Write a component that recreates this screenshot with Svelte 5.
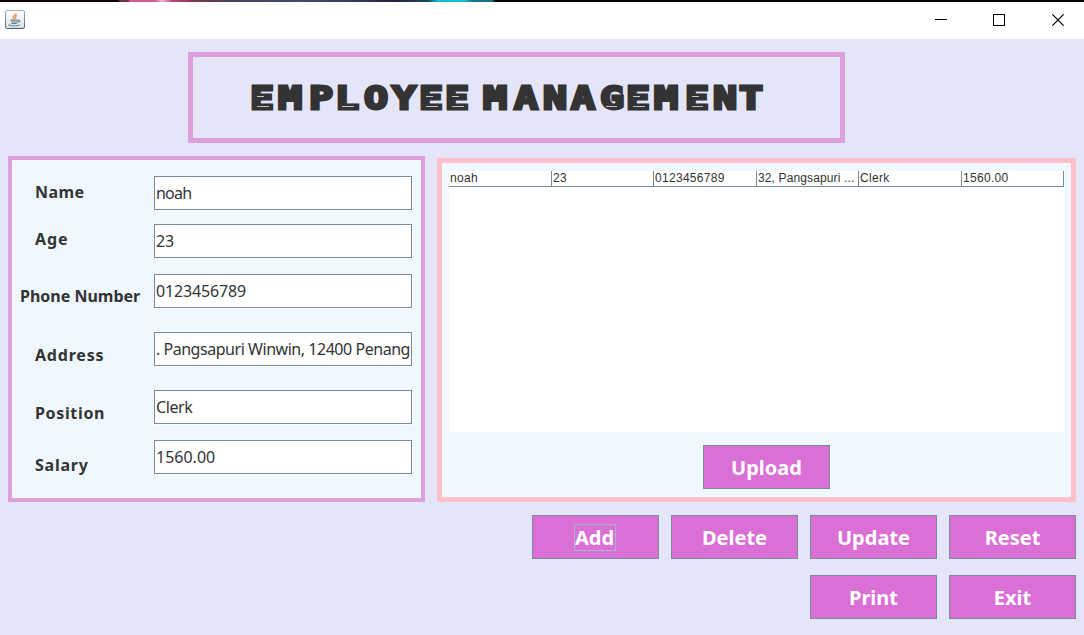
<script>
  const fields = [
    { label: 'Name', value: 'noah', gap: 0, shift: -1, indent: 23, ls: 0.4, vs: -0.8 },
    { label: 'Age', value: '23', gap: 14, shift: -2, indent: 23, ls: 0.9, vs: -0.15 },
    { label: 'Phone Number', value: '0123456789', gap: 16, shift: 5, indent: 8, ls: 0, vs: -0.15 },
    { label: 'Address', value: '. Pangsapuri Winwin, 12400 Penang', gap: 24, shift: 6, indent: 23, ls: 0.8, vs: -0.46 },
    { label: 'Position', value: 'Clerk', gap: 24, shift: 6, indent: 23, ls: 0.65, vs: -0.4 },
    { label: 'Salary', value: '1560.00', gap: 16, shift: 8, indent: 23, ls: 0.75, vs: 0 }
  ];
  const cells = ['noah', '23', '0123456789', '32, Pangsapuri ...', 'Clerk', '1560.00'];
  const actions = ['Add', 'Delete', 'Update', 'Reset', 'Print', 'Exit'];
  const stretch = 1.23;
  const letterX = [250, 278, 309, 335, 364, 392, 419, 445, 471, 483, 514, 543, 571, 600, 626, 654, 685, 713, 739]
    .map((x) => (x / stretch).toFixed(2))
    .join(' ');
</script>

<div class="window">
  <header>
    <svg class="java" width="20" height="19" viewBox="0 0 20 19">
      <defs>
        <linearGradient id="edge" x1="0" y1="0" x2="0" y2="1"><stop offset="0" stop-color="#9ab0c4" /><stop offset="1" stop-color="#47657f" /></linearGradient>
        <linearGradient id="face" x1="0" y1="0" x2="0" y2="1"><stop offset="0" stop-color="#fff" /><stop offset="1" stop-color="#dedfe1" /></linearGradient>
      </defs>
      <rect x=".5" y=".5" width="19" height="18" rx="1.5" fill="url(#face)" stroke="url(#edge)" />
      <path d="M11 3.2C11.5 5 7.3 5.6 8.3 8L9.7 9M12 5.5C9.5 6 10.7 7.2 10.2 8.7" fill="none" stroke="#f29a4b" stroke-width="1.5" />
      <path d="M5.5 10.2H13M6 12H12.5M6.5 13.5H11.7M13 10.5C15.5 9.8 15.3 12 12.7 12.4" fill="none" stroke="#5f8196" stroke-width="1.2" />
      <path d="M4.6 14.2C2.5 15.5 6 16 9.5 15.8C12 15.7 14 15.3 14.5 14.6" fill="none" stroke="#6f92a7" stroke-width="1.1" />
    </svg>
    <svg class="controls" width="130" height="12" viewBox="0 0 130 12">
      <path d="M0 5.5H12" stroke="#000" fill="none" />
      <rect x="58.5" y=".5" width="11" height="11" stroke="#000" fill="none" />
      <path d="M117.3 .3L128.7 11.7M128.7 .3L117.3 11.7" stroke="#000" stroke-width="1.1" fill="none" />
    </svg>
  </header>

  <main>
    <div class="title">
      <svg width="647" height="81" viewBox="193 57 647 81">
        <text y="108.7" x={letterX} transform="scale({stretch} 1)">EMPLOYEE MANAGEMENT</text>
        <path class="inlay" d="M257 96.500h7M257 106.500h12M342 106.500h12M426 96.500h7M426 106.500h12M452 96.500h7M452 106.500h12M606 106.500h11M633 96.500h7M633 106.500h12M692 96.500h7M692 106.500h11" />
      </svg>
    </div>

    <div class="columns">
      <section class="form">
        {#each fields as f}
          <div class="row" style="margin-top:{f.gap}px">
            <label for={f.label} style="padding-left:{f.indent}px;padding-top:{f.shift > 0 ? f.shift * 2 : 0}px;padding-bottom:{f.shift < 0 ? f.shift * -2 : 0}px"><span style="letter-spacing:{f.ls}px">{f.label}</span></label>
            <div class="input" class:end={f.label === 'Address'} id={f.label} style="letter-spacing:{f.vs}px"><span>{f.value}</span></div>
          </div>
        {/each}
      </section>

      <section class="data">
        <div class="table">
          <div class="record">
            {#each cells as c}<div class="cell">{c}</div>{/each}
          </div>
        </div>
        <button class="upload">Upload</button>
      </section>
    </div>

    <div class="actions">
      {#each actions as a}
        <button class={a.toLowerCase()}><span class:focus={a === 'Add'}>{a}</span></button>
      {/each}
    </div>
  </main>
</div>

<style>
  :global(body) { background: #e5e5f9; overflow: hidden; }
  .window { box-sizing: border-box; width: 1084px; height: 635px; display: flex; flex-direction: column; background: #e5e5f9; font-family: "Noto Sans", sans-serif; color: #333; }
  header { box-sizing: border-box; height: 39px; background: linear-gradient(90deg, #10040d 0 118px, #70304d 120px 128px, #d45791 130px 155px, #e8bfd2 162px, #c8457f 172px, #793850 195px, #48415b 230px, #414a70 300px, #343e68 350px, #26213a 395px, #174a66 428px, #15bdcf 438px 464px, #17708c 474px 492px, #000 495px) top / 100% 2px no-repeat #fff; padding: 10px 19px 10px 5px; display: flex; justify-content: space-between; }
  .controls { margin: 4px 0 0; width: 130px; flex: none; }
  main { display: flex; flex-direction: column; padding: 13px 8px 0; }
  .title { box-sizing: border-box; width: 657px; height: 91px; margin-left: 180px; border: 5px solid #dda0dd; }
  .title svg { display: block; }
  text { font: bold 32.5px "DejaVu Sans Mono", monospace; fill: #333; stroke: #333; stroke-width: 2.8px; }
  .inlay { stroke: #e5e5f9; stroke-width: 1px; fill: none; opacity: .8; }
  .columns { display: flex; gap: 12px; margin-top: 13px; }
  .form { box-sizing: border-box; width: 417px; height: 346px; border: 4px solid #dda0dd; background: #f0f8ff; padding-top: 16px; }
  .row { display: flex; height: 34px; width: 400px; }
  label { box-sizing: border-box; width: 142px; flex: none; display: flex; align-items: center; font-size: 16px; font-weight: bold; white-space: nowrap; }
  .input { box-sizing: border-box; width: 258px; height: 34px; display: flex; align-items: center; padding: 0 1px; border: 1px solid #7a8a99; background: #fff; box-shadow: 1px 1px #fff; font-size: 16px; white-space: nowrap; overflow: hidden; }
  .end { justify-content: flex-end; }
  .data { box-sizing: border-box; width: 639px; height: 344px; margin-top: 2px; border: 5px solid #ffc0cb; background: #f0f8ff; padding: 8px 7px 0; display: flex; flex-direction: column; gap: 13px; }
  .table { width: 615px; height: 261px; background: #fff; }
  .record { display: grid; grid-template-columns: 103px 102px 103px 102px 103px 102px; }
  .cell { box-sizing: border-box; height: 16px; border-right: 1px solid #7a8a99; border-bottom: 1px solid #7a8a99; padding-left: 1px; font: 12px/14px "Liberation Sans", Arial, sans-serif; white-space: nowrap; letter-spacing: .3px; }
  .cell:nth-child(4) { letter-spacing: .13px; }
  button { box-sizing: border-box; width: 127px; height: 44px; border: 1px solid #7a8a99; border-radius: 0; background: #da70d6; color: #fff; font: bold 20px "Noto Sans", sans-serif; padding: 0; display: flex; align-items: center; justify-content: center; }
  .upload { margin-left: 254px; }
  .actions { display: grid; grid-template-columns: repeat(4, 127px); gap: 16px 12px; justify-content: end; margin-top: 13px; }
  .print { grid-column: 3; }
  .focus { box-sizing: border-box; width: 42px; height: 27px; display: flex; align-items: center; justify-content: center; border: 1px solid #a3b8cc; margin-right: 2px; }
</style>
